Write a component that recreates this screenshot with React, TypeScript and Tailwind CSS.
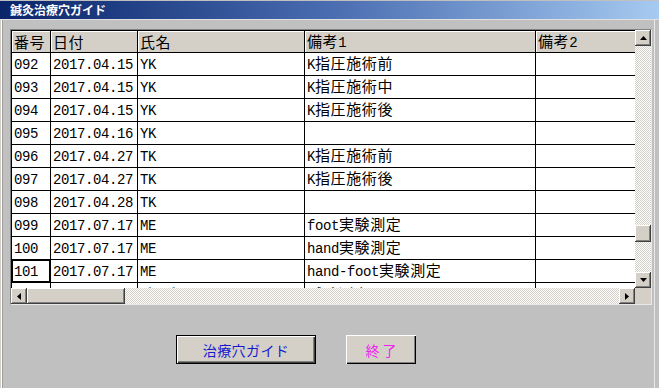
import React from 'react';

const rows: string[][] = [
  ['092', '2017.04.15', 'YK', 'K指圧施術前', ''],
  ['093', '2017.04.15', 'YK', 'K指圧施術中', ''],
  ['094', '2017.04.15', 'YK', 'K指圧施術後', ''],
  ['095', '2017.04.16', 'YK', '', ''],
  ['096', '2017.04.27', 'TK', 'K指圧施術前', ''],
  ['097', '2017.04.27', 'TK', 'K指圧施術後', ''],
  ['098', '2017.04.28', 'TK', '', ''],
  ['099', '2017.07.17', 'ME', 'foot実験測定', ''],
  ['100', '2017.07.17', 'ME', 'hand実験測定', ''],
  ['101', '2017.07.17', 'ME', 'hand-foot実験測定', ''],
  ['102', '2017.07.18', 'ﾃﾞﾓﾃﾞｰﾀ用', '試験測定', ''],
];

const headers = ['番号', '日付', '氏名', '備考1', '備考2'];
const widths = ['w-[39px]', 'w-[87px]', 'w-[167px]', 'w-[231px]', 'w-[120px]'];

// ascii runs get the narrow mono face, the rest the CJK face
const Txt: React.FC<{ s: string }> = ({ s }) => (
  <span className="whitespace-nowrap">
    {(s.match(/[\x00-\x7F]+|[^\x00-\x7F]+/g) ?? []).map((part, i) =>
      /^[\x00-\x7F]/.test(part) ? (
        <span key={i} className="font-['Liberation_Mono',monospace] text-[14px] tracking-[-0.4px]">
          {part}
        </span>
      ) : (
        <span key={i} className="font-['Noto_Sans_CJK_JP',sans-serif] text-[15px] tracking-[0.6px]">
          {part}
        </span>
      )
    )}
  </span>
);

const raised =
  'bg-[#d4d0c8] shadow-[inset_-1px_-1px_0_#404040,inset_1px_1px_0_#ffffff,inset_-2px_-2px_0_#808080]';
const checker =
  'bg-[image:repeating-conic-gradient(#d4d0c8_0%_25%,#ffffff_0%_50%)] bg-size-[2px_2px]';

const Arrow: React.FC<{ dir: 'up' | 'down' | 'left' | 'right' }> = ({ dir }) => {
  const pts = {
    up: '3.5,0 7,4 0,4',
    down: '0,0 7,0 3.5,4',
    left: '4,0 4,7 0,3.5',
    right: '0,0 4,3.5 0,7',
  }[dir];
  const vertical = dir === 'up' || dir === 'down';
  return (
    <svg width={vertical ? 7 : 4} height={vertical ? 4 : 7} viewBox={vertical ? '0 0 7 4' : '0 0 4 7'}>
      <polygon points={pts} fill="#000" />
    </svg>
  );
};

const SBtn: React.FC<{ dir: 'up' | 'down' | 'left' | 'right' }> = ({ dir }) => (
  <div className={`w-4 h-4 shrink-0 flex items-center justify-center ${raised}`}>
    <Arrow dir={dir} />
  </div>
);

const App: React.FC = () => {
  return (
    <div className="w-[659px] h-[388px] bg-[#c0c0c0] flex flex-col overflow-hidden">
      <div className="h-[20px] shrink-0 border-b border-[#e0e0e0] pt-[1px]">
        <div className="h-full bg-linear-to-r from-[#0a246a] via-[#4a6cb0] to-[#a6caf0] flex items-center pl-[10px]">
          <span className="font-['Noto_Sans_CJK_JP',sans-serif] text-[12px] font-bold text-white leading-none">
            鍼灸治療穴ガイド
          </span>
        </div>
      </div>

      <div className="flex-1 flex flex-col pt-[9px] pl-[10px] shadow-[inset_1px_0_0_#d4d0c8,inset_2px_0_0_#ffffff,inset_3px_0_0_#a0a0a0,inset_-4px_0_0_#c0c0c0,inset_-5px_0_0_#e8e8e8]">
        <div className="w-[642px] h-[276px] border-t border-l border-[#808080] border-r border-b border-r-[#e8e8e8] border-b-[#e8e8e8] grid grid-cols-[1fr_16px] grid-rows-[1fr_16px]">
          <div className="bg-white border-l border-t border-black overflow-hidden">
            <div className="flex h-[22px] border-b border-black bg-[#d4d0c8]">
              {headers.map((h, i) => (
                <div
                  key={h}
                  className={`${widths[i]} shrink-0 h-full border-r border-black pl-[2px] flex items-center whitespace-nowrap leading-[16px] shadow-[inset_1px_1px_0_#ffffff]`}
                >
                  <Txt s={h} />
                </div>
              ))}
            </div>
            {rows.map((r, ri) => (
              <div key={r[0]} className="flex h-[23px] border-b border-black">
                {r.map((c, ci) => (
                  <div
                    key={ci}
                    className={`${widths[ci]} shrink-0 h-full border-r border-black pl-[2px] flex items-center overflow-hidden whitespace-nowrap leading-[16px] ${
                      ri === 9 && ci === 0 ? 'shadow-[inset_1px_1px_0_#000000,inset_-1px_-1px_0_#000000]' : ''
                    }`}
                  >
                    <Txt s={c} />
                  </div>
                ))}
              </div>
            ))}
          </div>

          <div className="flex flex-col">
            <SBtn dir="up" />
            <div className={`flex-1 ${checker}`}>
              <div className={`w-4 h-[17px] mt-[179px] ${raised}`} />
            </div>
            <SBtn dir="down" />
          </div>

          <div className="flex">
            <SBtn dir="left" />
            <div className={`w-[98px] h-4 ${raised}`} />
            <div className={`flex-1 ${checker}`} />
            <SBtn dir="right" />
          </div>

          <div className="bg-[#d4d0c8]" />
        </div>

        <div className="flex gap-[30px] pl-[166px] mt-[30px]">
          <button className="w-[140px] h-[29px] border border-black bg-[#d4d0c8] shadow-[inset_1px_1px_0_#ffffff,inset_-1px_-1px_0_#404040,inset_-2px_-2px_0_#808080] flex items-center justify-center">
            <span className="font-['Noto_Sans_CJK_JP',sans-serif] text-[14px] tracking-[0.4px] text-[#1818d0] leading-none">
              治療穴ガイド
            </span>
          </button>
          <button className="w-[70px] h-[29px] bg-[#d4d0c8] shadow-[inset_1px_1px_0_#ffffff,inset_-1px_-1px_0_#000000,inset_-2px_-2px_0_#808080] flex items-center justify-center">
            <span className="font-['Noto_Sans_CJK_JP',sans-serif] text-[14px] text-[#f020f0] leading-none whitespace-pre">
              終 了
            </span>
          </button>
        </div>
      </div>
    </div>
  );
};

export default App;
